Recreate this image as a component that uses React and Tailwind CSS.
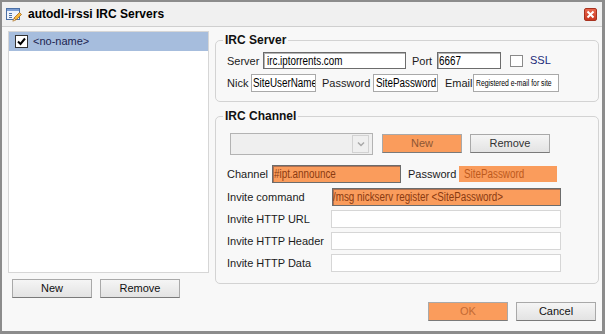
import React from "react";

// dialog: autodl-irssi IRC Servers
const Btn = ({ children, orange, w = "w-[80px]", className = "" }) => (
  <div
    className={`${w} h-[19px] flex items-center justify-center text-[11px] border border-[#a9a9a9] border-b-[#7a7a7a] ${
      orange ? "bg-[#fa9c5c] text-[#8d5634]" : "bg-linear-to-b from-[#f5f5f5] to-[#e3e3e3] text-[#111]"
    } ${className}`}
  >
    {children}
  </div>
);

const Label = ({ children, w, className = "" }) => (
  <div className={`${w} text-[11px] text-[#1b1b1b] leading-[14px] ${className}`}>{children}</div>
);

// narrow text: no condensed face installed, so squeeze Liberation Sans
const Field = ({ value, w, h = "h-[17px]", kind = "dark", text = "text-[12px]", className = "" }) => {
  const styles = {
    dark: "bg-white border border-[#6c6c6c] shadow-[inset_1px_1px_0_#b4b4b4] text-black",
    light: "bg-white border border-[#a9a9a9] text-black",
    plain: "bg-white border border-[#d6d6d6] text-black",
    orangeDark: "bg-[#fa9c5c] border border-[#6c6c6c] shadow-[inset_1px_1px_0_#b07050] text-[#8a3a10]",
    orange: "bg-[#fa9c5c] text-[#bd5a1c]",
  };
  return (
    <div
      className={`${w} ${h} ${styles[kind]} ${text} flex items-center overflow-hidden whitespace-nowrap leading-none ${className}`}
    >
      <span className="inline-block origin-left scale-x-[0.82]">{value}</span>
    </div>
  );
};

const Group = ({ title, className = "", children }) => (
  <fieldset className={`border border-[#d3d3d3] rounded-[5px] pl-[11px] ${className}`}>
    <legend className="-ml-[4px] px-[2px] text-[12px] font-bold leading-[14px] text-[#111]">{title}</legend>
    {children}
  </fieldset>
);

export default function App() {
  return (
    <div className="w-[605px] h-[334px] flex flex-col bg-[#f8f8f8] border-l-[2px] border-t-[2px] border-r-[3px] border-b-[3px] border-[#8c8c8c] font-['Liberation_Sans',Arial,sans-serif] overflow-hidden">
      {/* title bar */}
      <div className="h-[25px] flex items-center bg-[#f0f0f0] border-b border-[#cfcfcf] shrink-0">
        <svg className="ml-[4px]" width="17" height="15" viewBox="0 0 17 15">
          <rect x="0.5" y="1.5" width="13" height="11" fill="#eef3fb" stroke="#4a6fa5" />
          <rect x="1" y="2" width="12" height="2" fill="#7b9dd2" />
          <line x1="3" y1="6.5" x2="6" y2="6.5" stroke="#4a6fa5" />
          <line x1="3" y1="8.5" x2="6" y2="8.5" stroke="#4a6fa5" />
          <line x1="3" y1="10.5" x2="6" y2="10.5" stroke="#4a6fa5" />
          <polygon points="8,11 13.5,5.5 15.5,7.5 10,13" fill="#f6b83c" stroke="#a86a1c" strokeWidth="0.8" />
          <polygon points="8,11 10,13 6.8,14.2" fill="#f0dcb0" stroke="#a86a1c" strokeWidth="0.6" />
        </svg>
        <div className="ml-[5px] text-[12px] font-bold text-black leading-none">autodl-irssi IRC Servers</div>
        <div className="ml-auto mr-[5px] w-[13px] h-[13px] rounded-[2px] bg-linear-to-b from-[#e8664c] to-[#c9361f] border border-[#a7321f] flex items-center justify-center">
          <svg width="9" height="9" viewBox="0 0 9 9">
            <path d="M1.5 1.5 L7.5 7.5 M7.5 1.5 L1.5 7.5" stroke="#fff" strokeWidth="2" />
          </svg>
        </div>
      </div>

      {/* body */}
      <div className="flex-1 flex pl-[6px] pt-[4px]">
        {/* server list */}
        <div className="w-[201px] flex flex-col">
          <div className="h-[242px] bg-white border border-[#d6d6d6]">
            <div className="h-[19px] bg-[#a6bddd] flex items-center">
              <div className="ml-[6px] w-[13px] h-[13px] bg-white border border-[#333] flex items-center justify-center">
                <svg width="11" height="11" viewBox="0 0 11 11">
                  <path d="M2 5.5 L4.5 8 L9 2.5" stroke="#000" strokeWidth="2" fill="none" />
                </svg>
              </div>
              <span className="ml-[5px] text-[11px] text-[#1c2450]">&lt;no-name&gt;</span>
            </div>
          </div>
          <div className="mt-[6px] pl-[4px] flex gap-[8px]">
            <Btn>New</Btn>
            <Btn>Remove</Btn>
          </div>
        </div>

        {/* right side */}
        <div className="ml-[6px] w-[384px] flex flex-col">
          <Group title="IRC Server" className="mt-[2px] pb-[9px]">
            <div className="mt-[5px] flex items-center">
              <Label w="w-[36px]">Server</Label>
              <Field w="w-[143px]" value="irc.iptorrents.com" className="pl-[3px]" />
              <Label w="w-[25px]" className="ml-[6px]">Port</Label>
              <Field w="w-[64px]" value="6667" className="pl-[1px]" />
              <div className="ml-[9px] w-[13px] h-[12px] bg-white border border-[#8a8a8a]" />
              <span className="ml-[7px] text-[11px] text-[#1a2a7a]">SSL</span>
            </div>
            <div className="mt-[5px] flex items-center">
              <Label w="w-[24px]">Nick</Label>
              <Field w="w-[65px]" h="h-[18px]" kind="light" value="SiteUserName" className="pl-[1px]" />
              <Label w="w-[51px]" className="ml-[6px]">Password</Label>
              <Field w="w-[65px]" h="h-[18px]" kind="light" value="SitePassword" className="pl-[2px]" />
              <Label w="w-[28px]" className="ml-[7px]">Email</Label>
              <Field w="w-[86px]" h="h-[18px]" kind="light" text="text-[8.3px]" value="Registered e-mail for site" className="pl-[2px]" />
            </div>
          </Group>

          <Group title="IRC Channel" className="mt-[7px] pb-[11px]">
            <div className="mt-[10px] flex items-start">
              <div className="ml-[3px] w-[143px] h-[22px] bg-[#efefef] border border-[#b3b3b3] flex items-center justify-end pr-[3px]">
                <div className="w-[17px] h-[18px] border border-[#d2d2d2] flex items-center justify-center">
                  <svg width="8" height="6" viewBox="0 0 8 6">
                    <path d="M1 1.5 L4 4.5 L7 1.5" stroke="#a8a8a8" strokeWidth="1.5" fill="none" />
                  </svg>
                </div>
              </div>
              <Btn orange className="ml-[9px] mt-[1px] border-[#8a8a8a] border-b-[#6a6a6a]">New</Btn>
              <Btn className="ml-[8px] mt-[1px] text-[#333]">Remove</Btn>
            </div>
            <div className="mt-[10px] h-[18px] flex items-center">
              <Label w="w-[45px]">Channel</Label>
              <Field w="w-[129px]" h="h-[18px]" kind="orangeDark" value="#ipt.announce" className="pl-[1px]" />
              <Label w="w-[51px]" className="ml-[7px]">Password</Label>
              <Field w="w-[98px]" h="h-[16px]" kind="orange" value="SitePassword" className="pl-[5px]" />
            </div>
            <div className="mt-[5px] flex flex-col gap-[4px]">
              <div className="flex items-center">
                <Label w="w-[105px]">Invite command</Label>
                <Field w="w-[229px]" h="h-[18px]" kind="orangeDark" value="/msg nickserv register <SitePassword>" />
              </div>
              <div className="flex items-center">
                <Label w="w-[104px]">Invite HTTP URL</Label>
                <Field w="w-[230px]" h="h-[18px]" kind="plain" value="" />
              </div>
              <div className="flex items-center">
                <Label w="w-[104px]">Invite HTTP Header</Label>
                <Field w="w-[230px]" h="h-[18px]" kind="plain" value="" />
              </div>
              <div className="flex items-center">
                <Label w="w-[104px]">Invite HTTP Data</Label>
                <Field w="w-[230px]" h="h-[18px]" kind="plain" value="" />
              </div>
            </div>
          </Group>

          <div className="mt-[18px] flex justify-end gap-[8px] pr-[3px]">
            <Btn orange className="border-[#8a8a8a] border-b-[#6a6a6a] text-[#c46a34]">OK</Btn>
            <Btn>Cancel</Btn>
          </div>
        </div>
      </div>
    </div>
  );
}
